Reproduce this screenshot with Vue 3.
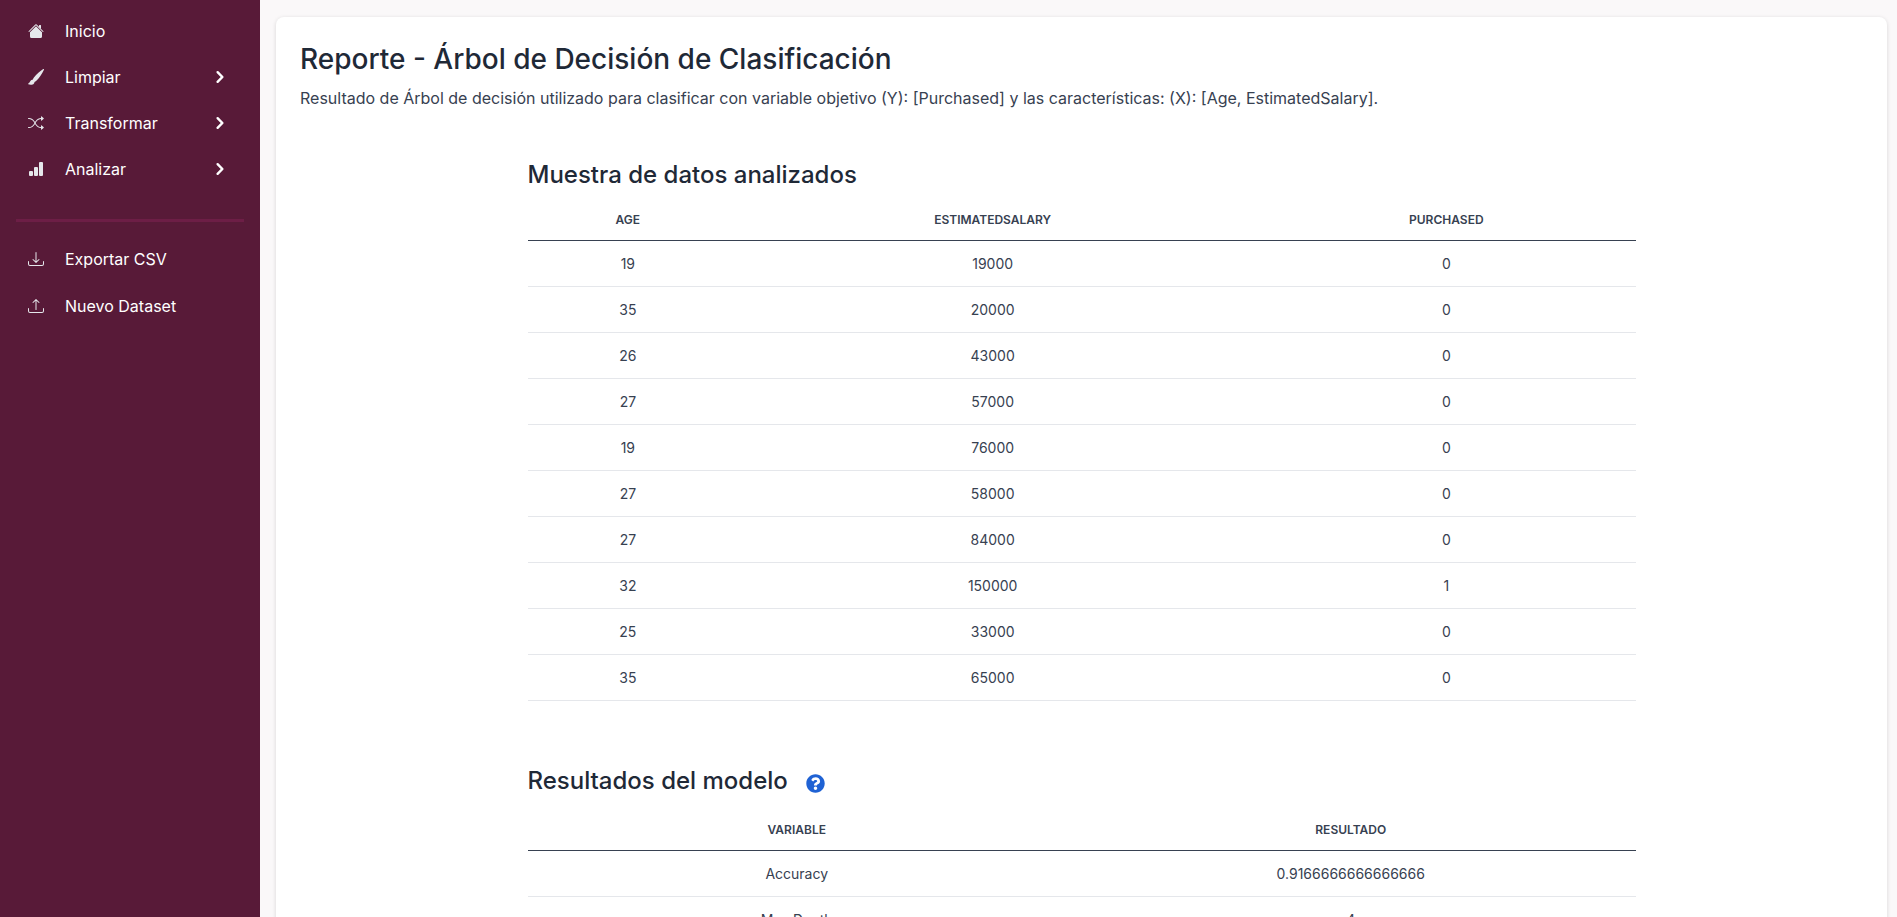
<script setup>
const groups = [
  [
    { label: 'Inicio', icon: 'home' },
    { label: 'Limpiar', icon: 'brush', expandable: true },
    { label: 'Transformar', icon: 'shuffle', expandable: true },
    { label: 'Analizar', icon: 'chart', expandable: true },
  ],
  [
    { label: 'Exportar CSV', icon: 'download' },
    { label: 'Nuevo Dataset', icon: 'upload' },
  ],
]

const tray =
  'M.5 9.9a.5.5 0 0 1 .5.5v2.5a1 1 0 0 0 1 1h12a1 1 0 0 0 1-1v-2.5a.5.5 0 0 1 1 0v2.5a2 2 0 0 1-2 2H2a2 2 0 0 1-2-2v-2.5a.5.5 0 0 1 .5-.5z'

const icons = {
  home: [
    'M8 3.293l6 6V13.5a1.5 1.5 0 0 1-1.5 1.5h-9A1.5 1.5 0 0 1 2 13.5V9.293l6-6zm5-.793V6l-2-2V2.5a.5.5 0 0 1 .5-.5h1a.5.5 0 0 1 .5.5z',
    'M7.293 1.5a1 1 0 0 1 1.414 0l6.647 6.646a.5.5 0 0 1-.708.708L8 2.207 1.354 8.854a.5.5 0 1 1-.708-.708L7.293 1.5z',
  ],
  brush: [
    'M15.825.12a.5.5 0 0 1 .132.584c-1.53 3.43-4.743 8.17-7.095 10.64a6.067 6.067 0 0 1-2.373 1.534c-.018.227-.06.538-.16.868-.201.659-.667 1.479-1.708 1.74a8.118 8.118 0 0 1-3.078.132 3.659 3.659 0 0 1-.562-.135 1.382 1.382 0 0 1-.466-.247.714.714 0 0 1-.204-.288.622.622 0 0 1 .004-.443c.095-.245.316-.38.461-.452.394-.197.625-.453.867-.826.095-.144.184-.297.287-.472l.117-.198c.151-.255.326-.54.546-.848.528-.739 1.201-.925 1.746-.896.126.007.243.025.348.048.062-.172.142-.38.238-.608.261-.619.658-1.419 1.187-2.069 2.176-2.67 6.18-6.206 9.117-8.104a.5.5 0 0 1 .596.04z',
  ],
  shuffle: [
    'M0 3.5A.5.5 0 0 1 .5 3H1c2.202 0 3.827 1.24 4.874 2.418.49.552.865 1.102 1.126 1.532.26-.43.636-.98 1.126-1.532C9.173 4.24 10.798 3 13 3v1c-1.798 0-3.173 1.01-4.126 2.082A9.624 9.624 0 0 0 7.556 8a9.624 9.624 0 0 0 1.317 1.918C9.828 10.99 11.204 12 13 12v1c-2.202 0-3.827-1.24-4.874-2.418A10.595 10.595 0 0 1 7 9.05c-.26.43-.636.98-1.126 1.532C4.827 11.76 3.202 13 1 13H.5a.5.5 0 0 1 0-1H1c1.798 0 3.173-1.01 4.126-2.082A9.624 9.624 0 0 0 6.444 8a9.624 9.624 0 0 0-1.317-1.918C4.172 5.01 2.796 4 1 4H.5a.5.5 0 0 1-.5-.5z',
    'M13 5.466V1.534a.25.25 0 0 1 .41-.192l2.36 1.966c.12.1.12.284 0 .384l-2.36 1.966a.25.25 0 0 1-.41-.192zm0 9v-3.932a.25.25 0 0 1 .41-.192l2.36 1.966c.12.1.12.284 0 .384l-2.36 1.966a.25.25 0 0 1-.41-.192z',
  ],
  chart: [
    'M1 11a1 1 0 0 1 1-1h2a1 1 0 0 1 1 1v3a1 1 0 0 1-1 1H2a1 1 0 0 1-1-1v-3zm5-4a1 1 0 0 1 1-1h2a1 1 0 0 1 1 1v7a1 1 0 0 1-1 1H7a1 1 0 0 1-1-1V7zm5-5a1 1 0 0 1 1-1h2a1 1 0 0 1 1 1v12a1 1 0 0 1-1 1h-2a1 1 0 0 1-1-1V2z',
  ],
  download: [
    tray,
    'M7.646 11.854a.5.5 0 0 0 .708 0l3-3a.5.5 0 0 0-.708-.708L8.5 10.293V1.5a.5.5 0 0 0-1 0v8.793L5.354 8.146a.5.5 0 1 0-.708.708l3 3z',
  ],
  upload: [
    tray,
    'M7.646 1.146a.5.5 0 0 1 .708 0l3 3a.5.5 0 0 1-.708.708L8.5 2.707V11.5a.5.5 0 0 1-1 0V2.707L5.354 4.854a.5.5 0 1 1-.708-.708l3-3z',
  ],
}

const sampleColumns = ['Age', 'EstimatedSalary', 'Purchased']
const sampleRows = [
  [19, 19000, 0],
  [35, 20000, 0],
  [26, 43000, 0],
  [27, 57000, 0],
  [19, 76000, 0],
  [27, 58000, 0],
  [27, 84000, 0],
  [32, 150000, 1],
  [25, 33000, 0],
  [35, 65000, 0],
]

const resultRows = [
  ['Accuracy', '0.9166666666666666'],
  ['Max Depth', '4'],
]
</script>

<template>
  <div class="layout">
    <aside class="sidebar">
      <nav>
        <ul v-for="(group, g) in groups" :key="g" class="menu">
          <li v-for="item in group" :key="item.label">
            <component
              :is="item.expandable ? 'button' : 'a'"
              class="menu-item"
              :href="item.expandable ? undefined : '#'"
              :type="item.expandable ? 'button' : undefined"
            >
              <svg class="menu-icon" viewBox="0 0 16 16" aria-hidden="true">
                <path v-for="d in icons[item.icon]" :key="d" :d="d" />
              </svg>
              <span class="menu-label">{{ item.label }}</span>
              <svg v-if="item.expandable" class="chevron" viewBox="0 0 20 20" aria-hidden="true">
                <path
                  d="M7.293 14.707a1 1 0 010-1.414L10.586 10 7.293 6.707a1 1 0 011.414-1.414l4 4a1 1 0 010 1.414l-4 4a1 1 0 01-1.414 0z"
                />
              </svg>
            </component>
          </li>
        </ul>
      </nav>
    </aside>

    <main class="main">
      <article class="card">
        <h1>Reporte - Árbol de Decisión de Clasificación</h1>
        <p class="summary">
          Resultado de Árbol de decisión utilizado para clasificar con variable objetivo (Y):
          [Purchased] y las características: (X): [Age, EstimatedSalary].
        </p>

        <section class="section">
          <h2>Muestra de datos analizados</h2>
          <table>
            <thead>
              <tr>
                <th v-for="column in sampleColumns" :key="column" scope="col">{{ column }}</th>
              </tr>
            </thead>
            <tbody>
              <tr v-for="(row, r) in sampleRows" :key="r">
                <td v-for="(value, c) in row" :key="c">{{ value }}</td>
              </tr>
            </tbody>
          </table>
        </section>

        <section class="section results">
          <div class="heading">
            <h2>Resultados del modelo</h2>
            <button class="help" type="button" aria-label="Ayuda">
              <svg viewBox="0 0 512 512" aria-hidden="true">
                <path
                  d="M504 256c0 136.997-111.043 248-248 248S8 392.997 8 256C8 119.083 119.043 8 256 8s248 111.083 248 248zM262.655 90c-54.497 0-89.255 22.957-116.549 63.758-3.536 5.286-2.353 12.415 2.715 16.258l34.699 26.31c5.205 3.947 12.621 3.008 16.665-2.122 17.864-22.658 30.113-35.797 57.303-35.797 20.429 0 45.698 13.148 45.698 32.958 0 14.976-12.363 22.667-32.534 33.976C247.128 238.528 216 254.941 216 296v4c0 6.627 5.373 12 12 12h56c6.627 0 12-5.373 12-12v-1.333c0-28.462 83.186-29.647 83.186-106.667 0-58.002-60.165-102-116.531-102zM256 338c-25.365 0-46 20.635-46 46 0 25.364 20.635 46 46 46s46-20.636 46-46c0-25.364-20.635-46-46-46z"
                />
              </svg>
            </button>
          </div>
          <table>
            <thead>
              <tr>
                <th class="variable" scope="col">Variable</th>
                <th scope="col">Resultado</th>
              </tr>
            </thead>
            <tbody>
              <tr v-for="row in resultRows" :key="row[0]">
                <td v-for="(value, c) in row" :key="c">{{ value }}</td>
              </tr>
            </tbody>
          </table>
        </section>
      </article>
    </main>
  </div>
</template>

<style>
body {
  margin: 0;
  background: #faf8f9;
}
</style>

<style scoped>
.layout {
  display: grid;
  grid-template-columns: 260px 1fr;
  height: 100vh;
  overflow: hidden;
  font-family: Inter, 'Liberation Sans', sans-serif;
  color: #374151;
}

.sidebar {
  background: #581a38;
  padding: 8px 16px;
}

.menu {
  list-style: none;
  margin: 0;
  padding: 0;
}

.menu + .menu {
  display: grid;
  gap: 1px;
  margin-top: 27px;
  padding-top: 14px;
  border-top: 3px solid #6d1e46;
}

.menu-item {
  display: flex;
  align-items: center;
  box-sizing: border-box;
  width: 100%;
  height: 46px;
  padding: 0 12px;
  border: 0;
  background: none;
  color: #ffffff;
  font: inherit;
  font-size: 16px;
  line-height: 24px;
  text-align: left;
  text-decoration: none;
  cursor: pointer;
}

.menu-icon {
  width: 16px;
  height: 16px;
  fill: #e5e7eb;
}

.menu-label {
  flex: 1;
  margin-left: 21px;
}

.chevron {
  width: 24px;
  height: 24px;
  fill: #ffffff;
}

.main {
  overflow-y: auto;
  scrollbar-width: none;
  padding: 17px 10px 16px 16px;
}

.card {
  padding: 24px;
  border-radius: 8px;
  background: #ffffff;
  box-shadow: 0 1px 4px rgba(0, 0, 0, 0.14);
}

h1,
h2 {
  margin: 0;
  font-weight: 500;
  color: #1f2937;
}

h1 {
  font-size: 28px;
  line-height: 36px;
}

h2 {
  font-size: 24px;
  line-height: 32px;
}

.summary {
  margin: 9px 0 0;
  font-size: 16px;
  line-height: 24px;
}

.section {
  max-width: 1108px;
  margin: 49px auto 0;
}

.results {
  margin-top: 64px;
}

.heading {
  display: flex;
  align-items: center;
  gap: 18px;
  padding-bottom: 4px;
}

.help {
  display: flex;
  padding: 4px 0 0;
  border: 0;
  background: none;
  cursor: pointer;
}

.help svg {
  width: 19px;
  height: 19px;
  fill: #1f62d4;
}

table {
  width: 100%;
  margin-top: 9px;
  border-collapse: separate;
  border-spacing: 0;
  text-align: center;
}

th {
  padding: 12px 16px;
  border-bottom: 1px solid #374151;
  font-size: 12px;
  line-height: 16px;
  font-weight: 600;
  text-transform: uppercase;
}

td {
  padding: 12px 16px;
  border-bottom: 1px solid #e5e7eb;
  font-size: 14px;
  line-height: 21px;
}

.variable {
  width: 48.6%;
}
</style>
